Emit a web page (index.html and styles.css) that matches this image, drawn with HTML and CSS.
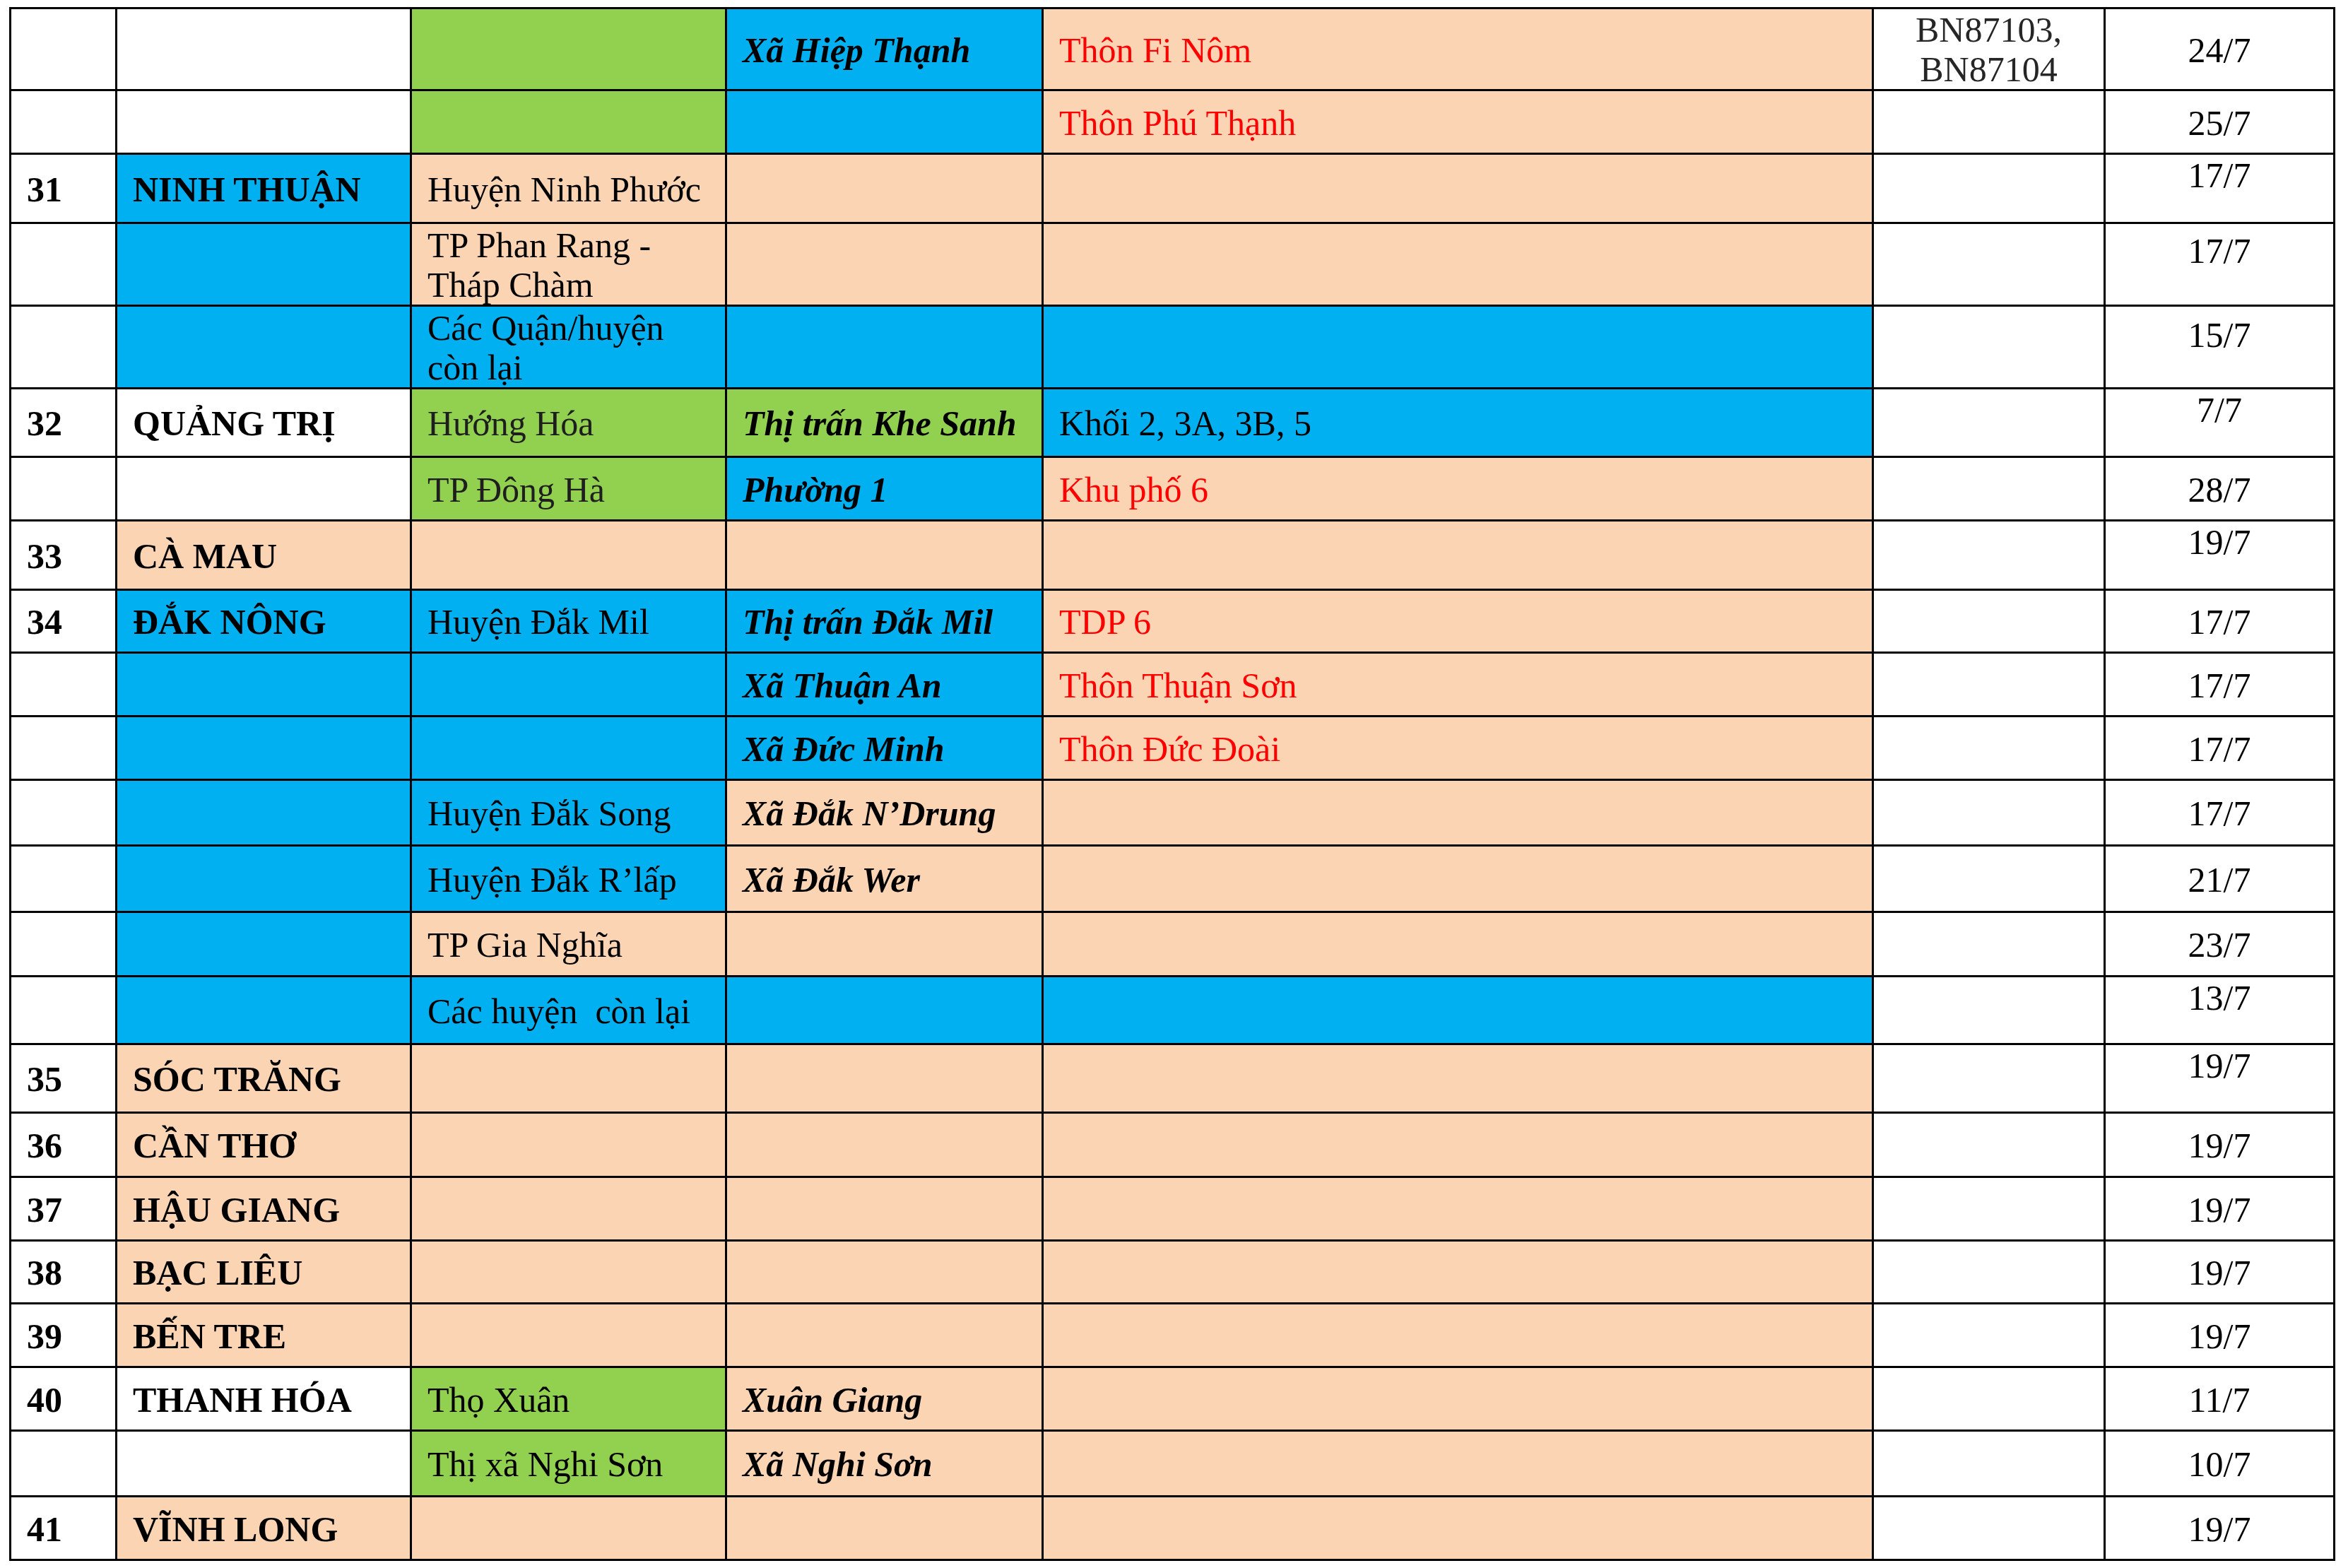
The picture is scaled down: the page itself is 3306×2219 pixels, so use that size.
FILE: index.html
```html
<!DOCTYPE html>
<html lang="vi">
<head>
<meta charset="utf-8">
<title>Danh sách địa phương</title>
<link rel="stylesheet" href="styles.css">
</head>
<body>
<table class="sheet">
  <colgroup>
    <col class="c-num"><col class="c-prov"><col class="c-dist"><col class="c-comm"><col class="c-vill"><col class="c-case"><col class="c-date">
  </colgroup>
  <tbody>
    <tr class="h113">
      <td></td><td></td><td class="g"></td>
      <td class="b bi">Xã Hiệp Thạnh</td>
      <td class="p red">Thôn Fi Nôm</td>
      <td class="case">BN87103, BN87104</td>
      <td class="date">24/7</td>
    </tr>
    <tr class="h87">
      <td></td><td></td><td class="g"></td><td class="b"></td>
      <td class="p red">Thôn Phú Thạnh</td>
      <td></td><td class="date">25/7</td>
    </tr>
    <tr class="h95">
      <td class="num">31</td>
      <td class="b prov">NINH THUẬN</td>
      <td class="p">Huyện Ninh Phước</td>
      <td class="p"></td><td class="p"></td><td></td>
      <td class="date top">17/7</td>
    </tr>
    <tr class="h114">
      <td></td><td class="b"></td>
      <td class="p multi">TP Phan Rang -<br>Tháp Chàm</td>
      <td class="p"></td><td class="p"></td><td></td>
      <td class="date top t10">17/7</td>
    </tr>
    <tr class="h114">
      <td></td><td class="b"></td>
      <td class="b multi">Các Quận/huyện<br>còn lại</td>
      <td class="b"></td><td class="b"></td><td></td>
      <td class="date top t12">15/7</td>
    </tr>
    <tr class="h94">
      <td class="num">32</td>
      <td class="prov">QUẢNG TRỊ</td>
      <td class="g dim">Hướng Hóa</td>
      <td class="g bi">Thị trấn Khe Sanh</td>
      <td class="b">Khối 2, 3A, 3B, 5</td>
      <td></td>
      <td class="date top">7/7</td>
    </tr>
    <tr class="h87">
      <td></td><td></td>
      <td class="g dim">TP Đông Hà</td>
      <td class="b bi">Phường 1</td>
      <td class="p red">Khu phố 6</td>
      <td></td><td class="date">28/7</td>
    </tr>
    <tr class="h95">
      <td class="num">33</td>
      <td class="p prov">CÀ MAU</td>
      <td class="p"></td><td class="p"></td><td class="p"></td><td></td>
      <td class="date top">19/7</td>
    </tr>
    <tr class="h86">
      <td class="num">34</td>
      <td class="b prov">ĐẮK NÔNG</td>
      <td class="b">Huyện Đắk Mil</td>
      <td class="b bi">Thị trấn Đắk Mil</td>
      <td class="p red">TDP 6</td>
      <td></td><td class="date">17/7</td>
    </tr>
    <tr class="h87">
      <td></td><td class="b"></td><td class="b"></td>
      <td class="b bi">Xã Thuận An</td>
      <td class="p red">Thôn Thuận Sơn</td>
      <td></td><td class="date">17/7</td>
    </tr>
    <tr class="h87">
      <td></td><td class="b"></td><td class="b"></td>
      <td class="b bi">Xã Đức Minh</td>
      <td class="p red">Thôn Đức Đoài</td>
      <td></td><td class="date">17/7</td>
    </tr>
    <tr class="h90">
      <td></td><td class="b"></td>
      <td class="b">Huyện Đắk Song</td>
      <td class="p bi">Xã Đắk N’Drung</td>
      <td class="p"></td><td></td><td class="date">17/7</td>
    </tr>
    <tr class="h91">
      <td></td><td class="b"></td>
      <td class="b">Huyện Đắk R’lấp</td>
      <td class="p bi">Xã Đắk Wer</td>
      <td class="p"></td><td></td><td class="date">21/7</td>
    </tr>
    <tr class="h88">
      <td></td><td class="b"></td>
      <td class="p">TP Gia Nghĩa</td>
      <td class="p"></td><td class="p"></td><td></td><td class="date">23/7</td>
    </tr>
    <tr class="h93">
      <td></td><td class="b"></td>
      <td class="b">Các huyện&nbsp; còn lại</td>
      <td class="b"></td><td class="b"></td><td></td>
      <td class="date top">13/7</td>
    </tr>
    <tr class="h94">
      <td class="num">35</td>
      <td class="p prov">SÓC TRĂNG</td>
      <td class="p"></td><td class="p"></td><td class="p"></td><td></td>
      <td class="date top">19/7</td>
    </tr>
    <tr class="h88">
      <td class="num">36</td>
      <td class="p prov">CẦN THƠ</td>
      <td class="p"></td><td class="p"></td><td class="p"></td><td></td>
      <td class="date">19/7</td>
    </tr>
    <tr class="h87">
      <td class="num">37</td>
      <td class="p prov">HẬU GIANG</td>
      <td class="p"></td><td class="p"></td><td class="p"></td><td></td>
      <td class="date">19/7</td>
    </tr>
    <tr class="h86">
      <td class="num">38</td>
      <td class="p prov">BẠC LIÊU</td>
      <td class="p"></td><td class="p"></td><td class="p"></td><td></td>
      <td class="date">19/7</td>
    </tr>
    <tr class="h87">
      <td class="num">39</td>
      <td class="p prov">BẾN TRE</td>
      <td class="p"></td><td class="p"></td><td class="p"></td><td></td>
      <td class="date">19/7</td>
    </tr>
    <tr class="h87">
      <td class="num">40</td>
      <td class="prov">THANH HÓA</td>
      <td class="g">Thọ Xuân</td>
      <td class="p bi">Xuân Giang</td>
      <td class="p"></td><td></td><td class="date">11/7</td>
    </tr>
    <tr class="h90">
      <td></td><td></td>
      <td class="g">Thị xã Nghi Sơn</td>
      <td class="p bi">Xã Nghi Sơn</td>
      <td class="p"></td><td></td><td class="date">10/7</td>
    </tr>
    <tr class="h87">
      <td class="num">41</td>
      <td class="p prov">VĨNH LONG</td>
      <td class="p"></td><td class="p"></td><td class="p"></td><td></td>
      <td class="date">19/7</td>
    </tr>
  </tbody>
</table>
</body>
</html>
```

FILE: styles.css
```css
html, body {
  background: #ffffff;
}

body {
  margin: 10px 0 0 13px;
  font-family: "Liberation Serif", "Times New Roman", serif;
  font-size: 50px;
  color: #000000;
}

.sheet {
  border-collapse: separate;
  border-spacing: 3px;
  background: #000000;
  table-layout: fixed;
  width: 3292px;
}

.c-num  { width: 147px; }
.c-prov { width: 414px; }
.c-dist { width: 443px; }
.c-comm { width: 445px; }
.c-vill { width: 1172px; }
.c-case { width: 325px; }
.c-date { width: 322px; }

.sheet td {
  background: #ffffff;
  padding: 3px 6px 0 22px;
  vertical-align: middle;
  line-height: 57px;
  white-space: normal;
  overflow: hidden;
}

.h86  { height: 86px; }
.h87  { height: 87px; }
.h88  { height: 88px; }
.h90  { height: 90px; }
.h91  { height: 91px; }
.h93  { height: 93px; }
.h94  { height: 94px; }
.h95  { height: 95px; }
.h113 { height: 113px; }
.h114 { height: 114px; }

/* fills */
.sheet td.g { background: #92d050; }
.sheet td.b { background: #00b0f0; }
.sheet td.p { background: #fbd4b4; }

/* text styles */
.num,
.prov {
  font-weight: bold;
}

.bi {
  font-weight: bold;
  font-style: italic;
}

.red { color: #ff0000; }
.dim { color: #1e1e1e; }

.sheet td.multi {
  padding-top: 2px;
  line-height: 56px;
}

.sheet td.case {
  text-align: center;
  padding: 0 8px;
  line-height: 56px;
  color: #262626;
}

.sheet td.date {
  text-align: center;
  padding: 3px 0 0 0;
}

.sheet td.top { vertical-align: top; padding-top: 1px; }
.sheet td.t10 { padding-top: 10px; }
.sheet td.t12 { padding-top: 12px; }
```
